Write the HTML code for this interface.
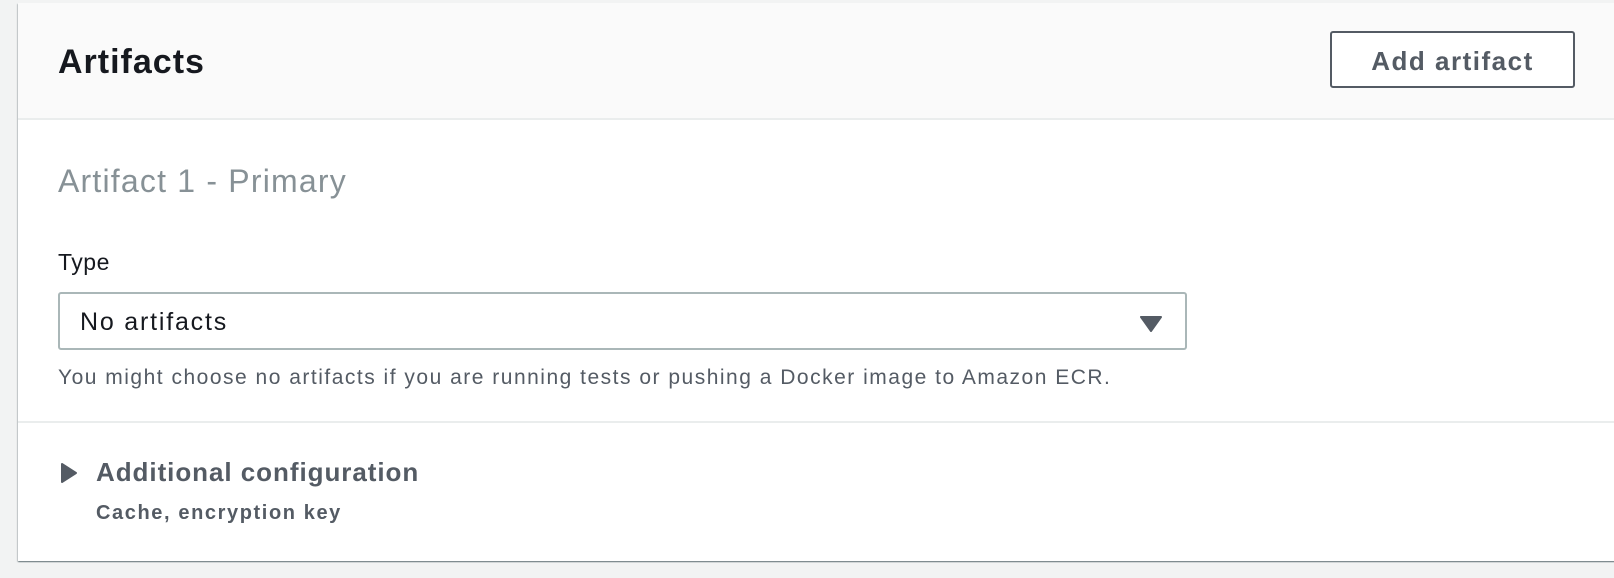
<!DOCTYPE html>
<html><head><style>
body{margin:0;width:1614px;height:578px;background:#f2f3f3;font-family:"Liberation Sans",Arial,sans-serif;overflow:hidden;position:relative}
.card{position:absolute;left:18px;top:3px;width:1640px;height:558px;background:#fff;box-shadow:0 1px 1px 0 rgba(0,28,36,.4),1px 1px 1px 0 rgba(0,28,36,.15),-1px 1px 1px 0 rgba(0,28,36,.15)}
.hdr{position:absolute;left:0;top:0;width:100%;height:115px;background:#fafafa;border-bottom:2px solid #eaeded}
.t{position:absolute;font-weight:bold}
</style></head><body>
<div class="card">
<div class="hdr"></div>
<div class="t" style="left:40px;top:40px;font-size:34px;color:#16191f;letter-spacing:1px">Artifacts</div>
<div style="position:absolute;left:1312px;top:28px;width:245px;height:57px;border:2px solid #545b64;border-radius:3px;background:#fff;box-sizing:border-box"></div>
<div class="t" style="left:1312px;top:43px;width:245px;text-align:center;font-size:26px;color:#545b64;letter-spacing:1.5px">Add artifact</div>
<div style="position:absolute;left:40px;top:160px;font-size:32px;color:#879196;letter-spacing:1.2px">Artifact 1 - Primary</div>
<div style="position:absolute;left:40px;top:246px;font-size:23px;color:#16191f;letter-spacing:0.5px">Type</div>
<div style="position:absolute;left:40px;top:289px;width:1129px;height:58px;border:2px solid #aab7b8;border-radius:3px;box-sizing:border-box"></div>
<div style="position:absolute;left:62px;top:305px;font-size:25px;color:#16191f;letter-spacing:1.8px">No artifacts</div>
<svg style="position:absolute;left:1122px;top:312px" width="22" height="18"><path d="M1 2 L21 2 L11 16 Z" fill="#545b64" stroke="#545b64" stroke-width="2" stroke-linejoin="round"/></svg>
<div style="position:absolute;left:40px;top:363px;font-size:21px;color:#545b64;letter-spacing:1.5px">You might choose no artifacts if you are running tests or pushing a Docker image to Amazon ECR.</div>
<div style="position:absolute;left:0;top:418px;width:100%;height:2px;background:#eaeded"></div>
<svg style="position:absolute;left:42px;top:459px" width="18" height="22"><path d="M2 2 L16 11 L2 20 Z" fill="#545b64" stroke="#545b64" stroke-width="2" stroke-linejoin="round"/></svg>
<div class="t" style="left:78px;top:454px;font-size:26px;color:#545b64;letter-spacing:0.95px">Additional configuration</div>
<div class="t" style="left:78px;top:499px;font-size:20px;color:#545b64;letter-spacing:1.6px">Cache, encryption key</div>
</div>
</body></html>
